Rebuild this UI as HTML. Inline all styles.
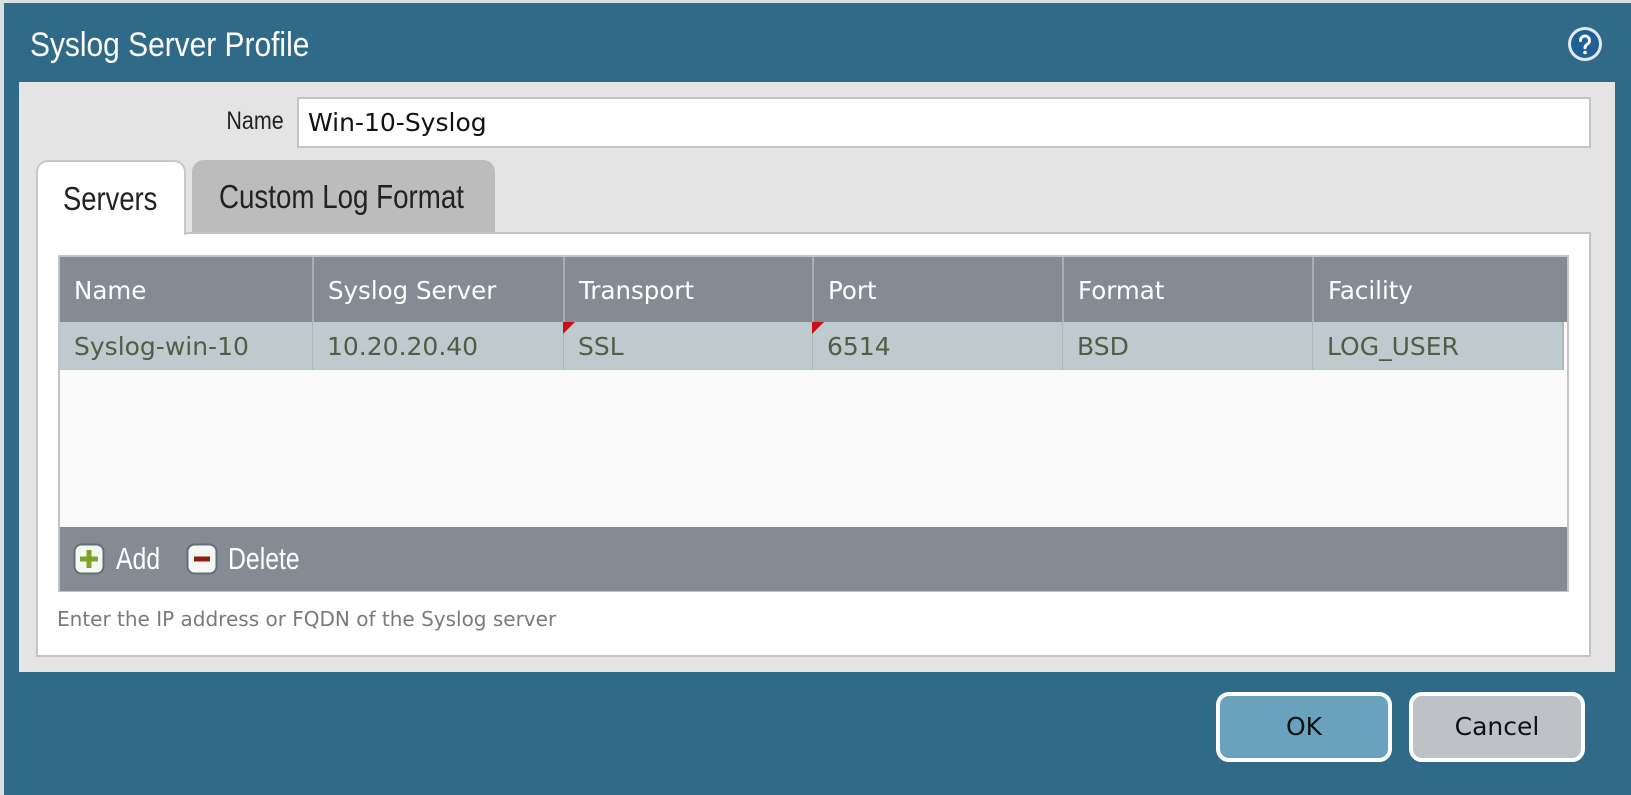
<!DOCTYPE html>
<html><head><style>
*{margin:0;padding:0;box-sizing:border-box}
body{width:1631px;height:795px;background:#d9dde0;position:relative;overflow:hidden;font-family:"DejaVu Sans","Liberation Sans",sans-serif}
.abs{position:absolute}
.nar{font-family:"Liberation Sans",sans-serif;display:inline-block;transform-origin:0 50%;white-space:nowrap}
.dlg{left:4px;top:3px;width:1627px;height:792px;background:#306a89}
.title{left:30px;top:26px;font-size:34px;color:#fff;transform:scaleX(.88)}
.content{left:19px;top:82px;width:1596px;height:590px;background:#e4e4e4}
.th{top:257px;height:65px;background:#858b92;color:#fff;font-size:24.5px;line-height:68px;padding-left:14px;border-left:2px solid #a9aeb3;white-space:nowrap}
.td{top:322px;height:48px;background:#bdcbce;color:#4d5f44;font-size:25px;line-height:50px;padding-left:14px;border-left:1px solid #a8b8bb}
.tri{width:0;height:0;border-top:12px solid #c8101a;border-right:12px solid transparent}
.btn{top:692px;width:176px;height:70px;border:4px solid #fff;border-radius:13px;font-size:25px;text-align:center;line-height:62px;color:#111}
</style></head><body>
<div class="abs dlg"></div>
<div class="abs title nar">Syslog Server Profile</div>
<svg class="abs" style="left:1566px;top:25px" width="38" height="38" viewBox="0 0 38 38">
<circle cx="19" cy="19" r="17" fill="#dfe9ef"/><circle cx="19" cy="19" r="14" fill="#1f5f93"/>
<path d="M14.5 15.5a4.5 4.5 0 1 1 6.5 4c-1.6 .9-2 1.6-2 3.2" stroke="#fff" stroke-width="3" fill="none" stroke-linecap="round"/>
<circle cx="19" cy="27.5" r="1.8" fill="#fff"/></svg>
<div class="abs content"></div>
<div class="abs" style="left:200px;top:106px;width:84px;text-align:right;font-size:25px;color:#222"><span class="nar" style="transform:scaleX(.86);transform-origin:100% 50%">Name</span></div>
<div class="abs" style="left:297px;top:97px;width:1294px;height:51px;background:#fff;border:2px solid #c4c4c4;font-size:25px;line-height:47px;padding-left:9px;color:#111">Win-10-Syslog</div>
<div class="abs" style="left:36px;top:232px;width:1555px;height:425px;background:#fff;border:2px solid #c3c3c3"></div>
<div class="abs" style="left:36px;top:160px;width:150px;height:75px;background:#fff;border:2px solid #c8c8c8;border-bottom:none;border-radius:12px 12px 0 0;font-size:33px;color:#222;line-height:74px;padding-left:25px"><span class="nar" style="transform:scaleX(.83)">Servers</span></div>
<div class="abs" style="left:192px;top:160px;width:303px;height:72px;background:#bcbcbc;border-radius:12px 12px 0 0;font-size:33px;color:#222;line-height:74px;padding-left:27px;white-space:nowrap"><span class="nar" style="transform:scaleX(.84)">Custom Log Format</span></div>
<div class="abs" style="left:58px;top:255px;width:1511px;height:337px;background:#fafafa;border:2px solid #c4c4c4"></div>
<div class="abs th" style="left:60px;width:252px;border-left:none">Name</div>
<div class="abs th" style="left:312px;width:251px">Syslog Server</div>
<div class="abs th" style="left:563px;width:249px">Transport</div>
<div class="abs th" style="left:812px;width:250px">Port</div>
<div class="abs th" style="left:1062px;width:250px">Format</div>
<div class="abs th" style="left:1312px;width:255px">Facility</div>
<div class="abs td" style="left:60px;width:252px;border-left:none">Syslog-win-10</div>
<div class="abs td" style="left:312px;width:251px">10.20.20.40</div>
<div class="abs td" style="left:563px;width:249px">SSL</div>
<div class="abs td" style="left:812px;width:250px">6514</div>
<div class="abs td" style="left:1062px;width:250px">BSD</div>
<div class="abs td" style="left:1312px;width:252px;border-right:2px solid #a8b8bb">LOG_USER</div>
<div class="abs tri" style="left:563px;top:322px"></div>
<div class="abs tri" style="left:812px;top:322px"></div>
<div class="abs" style="left:60px;top:527px;width:1507px;height:64px;background:#858b92"></div>
<svg class="abs" style="left:73px;top:543px" width="32" height="32" viewBox="0 0 32 32"><rect x="1.5" y="1.5" width="29" height="29" rx="7" fill="#f5f7f2" stroke="#5f6f7a" stroke-width="2"/><path d="M16 7v18M7 16h18" stroke="#7ea32a" stroke-width="5"/></svg>
<div class="abs" style="left:116px;top:541px;font-size:31px;color:#fff"><span class="nar" style="transform:scaleX(.8)">Add</span></div>
<svg class="abs" style="left:186px;top:543px" width="32" height="32" viewBox="0 0 32 32"><rect x="1.5" y="1.5" width="29" height="29" rx="7" fill="#f5f7f2" stroke="#5f6f7a" stroke-width="2"/><path d="M8 16h16" stroke="#8e1e10" stroke-width="5"/></svg>
<div class="abs" style="left:228px;top:541px;font-size:31px;color:#fff"><span class="nar" style="transform:scaleX(.8)">Delete</span></div>
<div class="abs" style="left:57px;top:607px;font-size:20px;color:#7a7a7a">Enter the IP address or FQDN of the Syslog server</div>
<div class="abs btn" style="left:1216px;background:#69a2bc">OK</div>
<div class="abs btn" style="left:1409px;background:#bec1c8">Cancel</div>
</body></html>
